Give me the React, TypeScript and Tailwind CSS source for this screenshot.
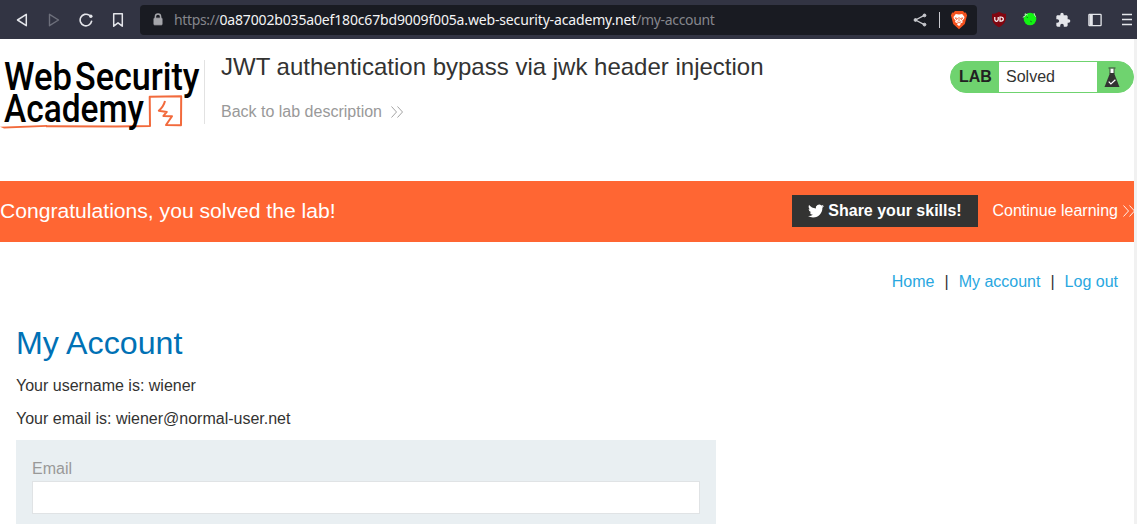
import React from "react";

function BrowserBar() {
  return (
    <div className="flex h-[39px] items-center bg-[#323443] pr-[5px] pl-[15px] text-[#e4e5ea]">
      <svg width="14" height="14" viewBox="0 0 14 14" fill="none" stroke="currentColor" strokeWidth="1.5" strokeLinejoin="round">
        <path d="M11.3 1.3v11.4L2.5 7z" />
      </svg>
      <svg className="ml-[18px] text-[#6d6f7b]" width="14" height="14" viewBox="0 0 14 14" fill="none" stroke="currentColor" strokeWidth="1.4" strokeLinejoin="round">
        <path d="M2.5 1.3v11.4L11.5 7z" />
      </svg>
      <svg className="ml-[18px]" width="14" height="14" viewBox="0 0 14 14" fill="none" stroke="currentColor" strokeWidth="1.6" strokeLinecap="round">
        <path d="M12.6 8.3A5.8 5.8 0 1 1 10.2 2.2" />
        <circle cx="11.8" cy="3.2" r="1.7" fill="currentColor" stroke="none" />
      </svg>
      <svg className="ml-[18px]" width="14" height="14" viewBox="0 0 14 14" fill="none" stroke="currentColor" strokeWidth="1.5" strokeLinejoin="round">
        <path d="M2.7.8h8.6v12.4L7 9.8l-4.3 3.4z" />
      </svg>
      <div className="ml-[15px] flex h-[30px] w-[837px] items-center rounded-[4px] bg-[#191b22] pr-[9px] pl-[13px]">
        <svg width="10" height="13" viewBox="0 0 10 13" fill="none" stroke="#a5a6ab">
          <path d="M2.4 6V3.6a2.6 2.6 0 0 1 5.2 0V6" strokeWidth="1.5" />
          <rect x="1" y="5.2" width="8" height="6.6" rx=".5" fill="#a5a6ab" />
        </svg>
        <div className="ml-[11px] flex-1 whitespace-nowrap font-['Noto_Sans',sans-serif] text-[14px] leading-[20px] text-[#85868c]">
          <span className="tracking-[-0.35px]">https://</span>
          <span className="tracking-[-0.155px] text-[#f4f4f5]">0a87002b035a0ef180c67bd9009f005a.web-security-academy.net</span>
          <span className="tracking-[-0.35px]">/my-account</span>
        </div>
        <svg width="14" height="14" viewBox="0 0 14 14" stroke="#c9cacf" fill="#c9cacf">
          <path d="M11.3 2.4 2.5 7l8.8 4.6" fill="none" strokeWidth="1.2" />
          <circle cx="11.5" cy="2.4" r="1.4" />
          <circle cx="2.5" cy="7" r="1.4" />
          <circle cx="11.5" cy="11.6" r="1.4" />
        </svg>
        <div className="ml-[12px] h-[16px] w-px bg-[#c9cacf]" />
        <svg className="ml-[10px]" width="18" height="20" viewBox="0 0 18 20">
          <path d="M5 1h8l1.6 1.7 1.3-.1 1.2 2.8-.5 1.5-1.8 7.2L9 19.3l-5.8-5.2L1.4 6.9.9 5.4l1.2-2.8 1.3.1z" fill="#f4511e" />
          <path d="m5.8 4 3.2.6 3.2-.6 2.3 3.1-.5 1.6-1.800 2 .6 1.600-1.800 1-1.100 1L11 14.600 9 16.100 7 14.600l.9-1-1.100-.6-1.800-1 .6-1.600-1.800-2-.3-1.300z" fill="#fff" />
          <path d="m5.2 7.800 2.300.7-.9 1.200zM12.800 7.800l-2.300.7.9 1.200zM9 7v4.500M6.800 11.500 9 13l2.200-1.500" fill="none" stroke="#f4511e" strokeWidth=".8" />
        </svg>
      </div>
      <svg className="ml-[14px]" width="16" height="17" viewBox="0 0 16 17">
        <path d="M8 .7C10 2 12 2.700 15 2.800c.2 6.800-.5 10-7 13.500C1.500 12.800.8 9.600 1 2.800 4 2.700 6 2 8 .7z" fill="#800610" />
        <path d="M3.800 6v2.600q0 1.700 1.700 1.700t1.700-1.700V6M9 6v4.200h1q2.300 0 2.300-2.100T10 6z" fill="none" stroke="#fff" strokeWidth="1.200" />
      </svg>
      <svg className="ml-[15px]" width="16" height="16" viewBox="0 0 16 16">
        <circle cx="8" cy="7" r="6.300" fill="#12f312" />
        <path d="m.8 5.300 2.700-1.500-.5-2 2.800 1.200M12 1.100l.7 2.500 1.300 1" fill="none" stroke="#b7f7b7" strokeWidth="1" />
        <path d="m4.500 5 1.500.8M8 9l2 1" stroke="#138e20" />
      </svg>
      <svg className="ml-[17px]" width="16" height="16" viewBox="0 0 24 24" fill="#e4e5ea">
        <path d="M20.500 11H19V7c0-1.100-.9-2-2-2h-4V3.500a2.500 2.500 0 0 0-5 0V5H4c-1.100 0-2 .9-2 2v3.800h1.500a2.700 2.700 0 0 1 0 5.400H2V20c0 1.100.9 2 2 2h3.800v-1.500a2.700 2.700 0 0 1 5.400 0V22H17c1.100 0 2-.9 2-2v-4h1.500a2.500 2.500 0 0 0 0-5z" />
      </svg>
      <svg className="ml-[17px]" width="14" height="14" viewBox="0 0 14 14" fill="none" stroke="currentColor" strokeWidth="1.300">
        <rect x=".9" y="1.300" width="12.200" height="11.400" rx=".7" />
        <path d="M1.500 2h3.300v10H1.500z" fill="currentColor" stroke="none" />
      </svg>
      <svg className="ml-auto" width="10" height="14" viewBox="0 0 10 14" stroke="currentColor" strokeWidth="1.500">
        <path d="M0 1.500h10M0 6.500h10M0 11.500h10" />
      </svg>
    </div>
  );
}

function Logo() {
  return (
    <svg className="shrink-0 overflow-visible" width="204" height="92" viewBox="0 39 204 92" fontFamily="Roboto, sans-serif" fontWeight="500" fontSize="38.500">
      <text x="4" y="89.700" textLength="68" lengthAdjust="spacingAndGlyphs">Web</text>
      <text x="75" y="89.700" textLength="124.500" lengthAdjust="spacingAndGlyphs">Security</text>
      <path d="M165 101c-1 4-3 7-6.200 9.700l8 1.200-3.400 4 8.600.4-6 8.700 15 .3.200-29.100-31.500.5.300 29.300-34 .5-70-.2" fill="none" stroke="#f26a3c" strokeWidth="2" strokeLinejoin="round" />
      <path d="M0 126.700 47 125v1.800L4 128.500z" fill="#f26a3c" />
      <text x="4" y="122" textLength="140" lengthAdjust="spacingAndGlyphs">Academy</text>
    </svg>
  );
}

function Chevrons({ className }: { className?: string }) {
  return (
    <svg className={className} width="12" height="14" viewBox="0 0 12 14" fill="none" stroke="currentColor" strokeWidth=".9">
      <path d="m.5 1.500 5 5.500-5 5.500M6.500 1.500l5 5.500-5 5.500" />
    </svg>
  );
}

function LabStatus() {
  return (
    <div className="mt-[22px] flex h-[32px] w-[184px] shrink-0 overflow-hidden rounded-full border border-[#6fd36f] bg-[#6fd36f] text-[16px] leading-[30px]">
      <span className="w-[48px] pl-[8px] font-bold text-[#222]">LAB</span>
      <span className="w-[98px] bg-white pl-[7px]">Solved</span>
      <svg className="mt-[5px] ml-[6px]" width="18" height="21" viewBox="0 0 18 21">
        <path d="M7 1.500h4v6H7z" fill="#fff" />
        <path d="M5.500 1h7M7 1.500V7M11 1.500V7" stroke="#333332" strokeWidth=".9" />
        <path d="M7 6h4l5.500 14h-15z" fill="#333332" />
        <path d="m5.700 14.700 2.200 2.200 4.500-4.200" fill="none" stroke="#fff" strokeWidth="1.200" />
      </svg>
    </div>
  );
}

export default function App() {
  return (
    <div className="h-[524px] overflow-hidden bg-white font-['Liberation_Sans',Arial,sans-serif] text-[16px] text-[#333332]">
      <BrowserBar />
      <div className="flex h-[485px]">
        <main className="w-[1134px]">
          <header className="flex h-[142px] items-start">
            <Logo />
            <div className="mt-[21px] h-[64px] w-px bg-[#e2e2e2]" />
            <div className="flex-1 pl-[16px]">
              <h2 className="mt-[13px] whitespace-nowrap text-[24px] leading-[30px]">JWT authentication bypass via jwk header injection</h2>
              <a className="mt-[20px] flex items-center leading-[20px] text-[#999]">
                Back to lab description
                <Chevrons className="mb-px ml-[9px]" />
              </a>
            </div>
            <LabStatus />
          </header>
          <section className="flex h-[61px] items-center bg-[#ff6633] pb-[2px] text-white">
            <h4 className="flex-1 text-[21.12px]">Congratulations, you solved the lab!</h4>
            <button className="flex h-[32px] w-[186px] items-center justify-center bg-[#333332] font-bold">
              <svg className="mr-[4px]" width="16" height="16" viewBox="0 0 24 24" fill="currentColor">
                <path d="M23.950 4.570a10 10 0 0 1-2.820.77 4.960 4.960 0 0 0 2.160-2.720c-.95.560-2 .960-3.130 1.180a4.920 4.920 0 0 0-8.380 4.480C7.690 8.090 4.070 6.130 1.640 3.160a4.820 4.820 0 0 0-.67 2.480c0 1.710.870 3.210 2.190 4.100a4.900 4.900 0 0 1-2.230-.62v.060a4.920 4.920 0 0 0 3.950 4.830 5 5 0 0 1-2.210.080 4.940 4.940 0 0 0 4.600 3.420A9.870 9.870 0 0 1 0 19.540a13.990 13.990 0 0 0 7.560 2.210c9.050 0 14-7.500 14-13.980 0-.210 0-.420-.020-.630a9.940 9.940 0 0 0 2.460-2.550z" />
              </svg>
              Share your skills!
            </button>
            <a className="ml-[14.5px] flex w-[141.5px] items-center whitespace-nowrap">
              Continue learning
              <Chevrons className="ml-[5px] shrink-0" />
            </a>
          </section>
          <nav className="flex justify-end gap-[10px] pt-[30px] pr-[16px] leading-[20px] text-[#29a7df]">
            <a>Home</a>
            <span className="text-[#333332]">|</span>
            <a>My account</a>
            <span className="text-[#333332]">|</span>
            <a>Log out</a>
          </nav>
          <div className="px-[16px]">
            <h1 className="mt-[32px] text-[32.2px] leading-[38px] text-[#0071b5]">My Account</h1>
            <p className="mt-[14px] leading-[20px]">Your username is: wiener</p>
            <p className="mt-[13px] leading-[20px]">Your email is: wiener@normal-user.net</p>
            <form className="mt-[11px] h-[120px] w-[700px] bg-[#e9eff2] px-[16px] pt-[19px]">
              <label className="block leading-[20px] text-[#999]">Email</label>
              <input aria-label="Email" className="mt-[2px] block h-[33px] w-full border border-[#e0e3e5] bg-white px-2 outline-none" />
            </form>
          </div>
        </main>
        <div className="flex-1 bg-[#f1f1f1]" />
      </div>
    </div>
  );
}
